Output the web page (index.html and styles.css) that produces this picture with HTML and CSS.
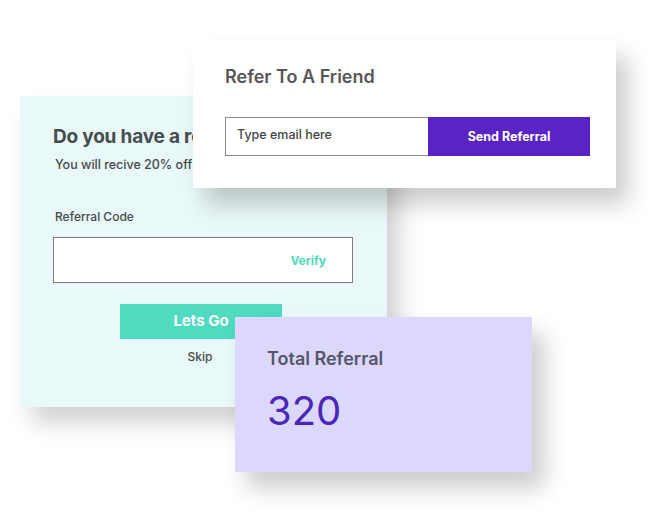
FILE: index.html
```html
<!DOCTYPE html>
<html>
<head>
<meta charset="utf-8">
<link rel="stylesheet" href="styles.css">
</head>
<body>
<div class="canvas">
  <section class="card code-card">
    <h2 class="code-title">Do you have a referral code?</h2>
    <p class="code-sub">You will recive 20% off in your first order</p>
    <label class="code-label">Referral Code</label>
    <div class="code-input">
      <span class="verify">Verify</span>
    </div>
    <button class="go-btn">Lets Go</button>
    <div class="skip">Skip</div>
  </section>

  <section class="card refer-card">
    <h2 class="refer-title">Refer To A Friend</h2>
    <div class="refer-row">
      <div class="email-input">Type email here</div>
      <button class="send-btn">Send Referral</button>
    </div>
  </section>

  <section class="card total-card">
    <h3 class="total-title">Total Referral</h3>
    <div class="total-num">320</div>
  </section>
</div>
</body>
</html>
```

FILE: styles.css
```css
* { box-sizing: border-box; }
html, body { margin: 0; padding: 0; background: #ffffff; }
body { font-family: Inter, "Open Sans", sans-serif; }
.canvas { position: relative; width: 671px; height: 532px; overflow: hidden; }

.card { position: absolute; }

.code-card {
  left: 20px; top: 96px; width: 367px; height: 311px;
  background: #e9f8f8;
  padding: 29px 33px 0 33px;
  display: flex; flex-direction: column;
  box-shadow: 12px 16px 22px rgba(0,0,0,0.18);
}
.code-title {
  margin: 0;
  font-size: 19px; line-height: 24px; font-weight: 700;
  color: #464d50; white-space: nowrap; letter-spacing: -0.2px;
}
.code-sub {
  margin: 8px 0 0 2px;
  font-size: 12.5px; line-height: 16px; font-weight: 500;
  color: #45494c; white-space: nowrap;
}
.code-label {
  margin: 36px 0 0 2px; font-size: 12px; line-height: 16px; font-weight: 500; color: #45494c;
}
.code-input {
  margin-top: 12px; width: 300px; height: 46px;
  background: #fff; border: 1px solid #7d7d7d;
  display: flex; align-items: center; justify-content: flex-end;
  padding-right: 26px;
}
.verify { color: #4fd8bc; font-size: 12px; font-weight: 700; }
.go-btn {
  margin: 21px 0 0 67px; width: 162px; height: 35px;
  border: 0; background: #4fdbc0; color: #fff;
  font-family: inherit; font-size: 15px; font-weight: 700; padding: 0 0 2px 0;
}
.skip {
  margin: 10px 0 0 0; width: 294px; text-align: center;
  font-size: 12px; line-height: 16px; font-weight: 500; color: #45494c;
}

.refer-card {
  left: 193px; top: 40px; width: 423px; height: 148px;
  background: #ffffff;
  padding: 25px 26px 0 32px;
  box-shadow: 12px 16px 22px rgba(0,0,0,0.2);
}
.refer-title {
  margin: 0; font-size: 18px; line-height: 24px; font-weight: 600; color: #575757;
}
.refer-row { margin-top: 28px; display: flex; height: 39px; }
.email-input {
  width: 203px; height: 39px; border: 1px solid #8a8a8a; border-right: 0;
  background: #fff; font-size: 12.5px; color: #454545; font-weight: 500;
  padding: 9px 0 0 11px;
}
.send-btn {
  width: 162px; height: 39px; border: 0; background: #5a24c4; color: #fff;
  font-family: inherit; font-size: 12.5px; font-weight: 700; padding: 0;
}

.total-card {
  left: 235px; top: 317px; width: 297px; height: 155px;
  background: #dcd8fd;
  padding: 31px 32px 0 32px;
  box-shadow: 12px 16px 22px rgba(0,0,0,0.2);
}
.total-title {
  margin: 0; font-size: 18px; line-height: 22px; font-weight: 600; color: #55556a;
}
.total-num {
  margin-top: 17px; font-size: 40px; line-height: 48px; font-weight: 400; color: #4a26b9;
}
```
